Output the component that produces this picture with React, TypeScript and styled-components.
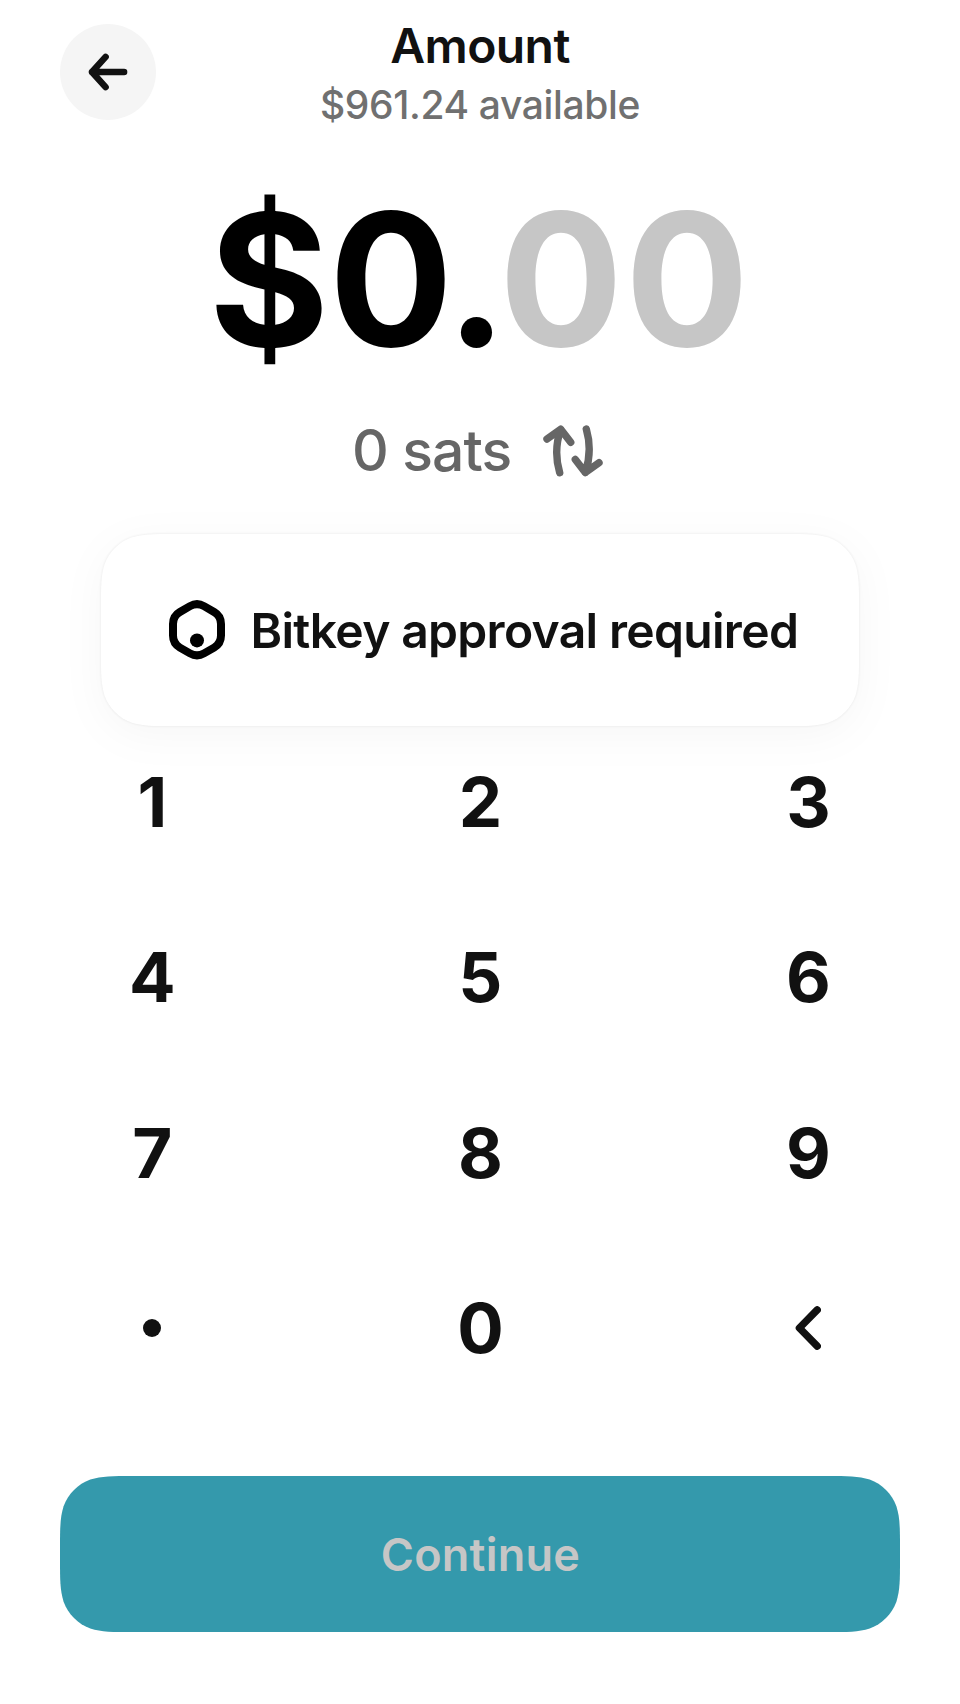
import React from "react";
import styled, { createGlobalStyle } from "styled-components";

const Global = createGlobalStyle`
  * { box-sizing: border-box; }
  body { margin: 0; background: #fff; }
  button { border: 0; padding: 0; background: none; font: inherit; color: inherit; }
`;

/* Rounded rectangle with continuous ("squircle") corners, as a CSS path. */
function squircle(w: number, h: number, r: number) {
  const a = 1.528665 * r, b = 1.088493 * r, c = 0.868407 * r;
  const d = 0.631494 * r, e = 0.074911 * r, f = 0.372824 * r, g = 0.16906 * r;
  return [
    `M${a} 0H${w - a}`,
    `C${w - b} 0 ${w - c} 0 ${w - d} ${e}`,
    `C${w - f} ${g} ${w - g} ${f} ${w - e} ${d}`,
    `C${w} ${c} ${w} ${b} ${w} ${a}V${h - a}`,
    `C${w} ${h - b} ${w} ${h - c} ${w - e} ${h - d}`,
    `C${w - g} ${h - f} ${w - f} ${h - g} ${w - d} ${h - e}`,
    `C${w - c} ${h} ${w - b} ${h} ${w - a} ${h}H${a}`,
    `C${b} ${h} ${c} ${h} ${d} ${h - e}`,
    `C${f} ${h - g} ${g} ${h - f} ${e} ${h - d}`,
    `C0 ${h - c} 0 ${h - b} 0 ${h - a}V${a}`,
    `C0 ${b} 0 ${c} ${e} ${d}`,
    `C${g} ${f} ${f} ${g} ${d} ${e}`,
    `C${c} 0 ${b} 0 ${a} 0Z`,
  ].join("");
}

const Screen = styled.main`
  width: 960px;
  height: 1704px;
  padding-bottom: 72px;
  display: flex;
  flex-direction: column;
  background: #fff;
  color: #111;
  font-family: Inter, "Liberation Sans", sans-serif;
  overflow: hidden;
`;

const Header = styled.header`
  display: grid;
  grid-template-columns: 96px 1fr 96px;
  height: 120px;
  padding: 24px 60px 0;
`;

const BackButton = styled.button`
  width: 96px;
  height: 96px;
  border-radius: 50%;
  background: #f5f5f5;
  display: grid;
  place-items: center;
`;

const Titles = styled.div`
  display: flex;
  flex-direction: column;
  align-items: center;
  margin-top: -3px;
`;

const Title = styled.h1`
  margin: 0;
  font-size: 48px;
  line-height: 49px;
  font-weight: 600;
  letter-spacing: -0.6px;
`;

const Available = styled.div`
  margin-top: 11px;
  font-size: 39px;
  line-height: 47px;
  font-weight: 500;
  letter-spacing: -0.37px;
  color: #707070;
`;

const Amount = styled.div`
  height: 200px;
  margin-top: 59px;
  line-height: 200px;
  font-size: 184px;
  font-weight: 700;
  font-kerning: none;
  color: #000;
  text-align: center;
  white-space: nowrap;
`;

const Glyph = styled.span<{ $tracking: number; $ghost?: boolean }>`
  letter-spacing: ${(p) => p.$tracking}px;
  color: ${(p) => (p.$ghost ? "#c6c6c6" : "inherit")};
`;

const Conversion = styled.div`
  display: flex;
  justify-content: center;
  align-items: center;
  gap: 31.5px;
  height: 69px;
  margin-top: 37px;
  padding-right: 5px;
  font-size: 57px;
  line-height: 69px;
  font-weight: 500;
  letter-spacing: -0.9px;
  color: #666;
`;

const NoticeShadow = styled.section`
  margin: 49px 101px 0;
  filter: drop-shadow(0 0 1.5px rgba(0, 0, 0, 0.09)) drop-shadow(0 9px 20px rgba(0, 0, 0, 0.035));
`;

const Notice = styled.div`
  height: 192px;
  padding-left: 5px;
  clip-path: path("${squircle(758, 192, 48)}");
  background: #fff;
  display: flex;
  justify-content: center;
  align-items: center;
  gap: 23.7px;
`;

const NoticeText = styled.span`
  padding-top: 1px;
  font-size: 48px;
  line-height: 59px;
  font-weight: 600;
  letter-spacing: -0.67px;
`;

const Keypad = styled.div`
  display: grid;
  grid-template-columns: repeat(3, 328px);
  grid-auto-rows: 175.33px;
  justify-content: center;
  margin-top: -11.5px;
`;

const Key = styled.button`
  display: grid;
  place-items: center;
  font-size: 69px;
  line-height: 84px;
  font-weight: 700;
  letter-spacing: -0.8px;
`;

const Continue = styled.button`
  height: 156px;
  margin: auto 60px 0;
  padding: 1px 0 0 1px;
  clip-path: path("${squircle(840, 156, 48)}");
  background: #3499ac;
  color: #c6c6c6;
  font-size: 45px;
  font-weight: 600;
  letter-spacing: 0.25px;
`;

export default function App() {
  return (
    <Screen>
      <Global />
      <Header>
        <BackButton aria-label="Back">
          <svg width="96" height="96" viewBox="0 0 96 96" fill="none" stroke="#111" strokeWidth="6.5" strokeLinecap="round" strokeLinejoin="round">
            <path d="M64.1 48H32M45.6 32.9L32 48l13.6 15.1" />
          </svg>
        </BackButton>
        <Titles>
          <Title>Amount</Title>
          <Available>$961.24 available</Available>
        </Titles>
      </Header>
      <Amount>
        <Glyph $tracking={-0.4}>$</Glyph>
        <Glyph $tracking={-7.4}>0</Glyph>
        <Glyph $tracking={-8.1}>.</Glyph>
        <Glyph $tracking={2} $ghost>00</Glyph>
      </Amount>
      <Conversion>
        <span>0 sats</span>
        <svg width="60" height="52" viewBox="0 0 60 52" fill="none" stroke="#666" strokeWidth="7.4" strokeLinecap="round" strokeLinejoin="round">
          <path d="M4 14L17.7 4.2l10 13.1M17.7 4.2Q10.2 26 16.7 47.7" />
          <path d="M56 37.7L42.3 47.5l-10-13.1M42.3 47.5Q49.6 25.7 43.3 4" />
        </svg>
      </Conversion>
      <NoticeShadow>
        <Notice>
          <svg width="60" height="60" viewBox="0 0 60 60" fill="none">
            <path d="M23 6.1Q30 2.1 37 6.1L47.1 12Q54 16 54 24V35.6Q54 43.6 47.1 47.6L37 53.4Q30 57.4 23 53.4L12.9 47.6Q6 43.6 6 35.6V24Q6 16 12.9 12Z" stroke="#000" strokeWidth="8" />
            <circle cx="30" cy="40.4" r="7" fill="#000" />
          </svg>
          <NoticeText>Bitkey approval required</NoticeText>
        </Notice>
      </NoticeShadow>
      <Keypad>
        {["1", "2", "3", "4", "5", "6", "7", "8", "9"].map((k) => <Key key={k}>{k}</Key>)}
        <Key aria-label="Decimal point">
          <svg width="18" height="18"><circle cx="9" cy="9" r="9" fill="#111" /></svg>
        </Key>
        <Key>0</Key>
        <Key aria-label="Delete">
          <svg width="26" height="44" viewBox="0 0 26 44" fill="none" stroke="#111" strokeWidth="7.4" strokeLinecap="round" strokeLinejoin="round">
            <path d="M22.2 3.9L4.4 22l17.8 18.1" />
          </svg>
        </Key>
      </Keypad>
      <Continue>Continue</Continue>
    </Screen>
  );
}
